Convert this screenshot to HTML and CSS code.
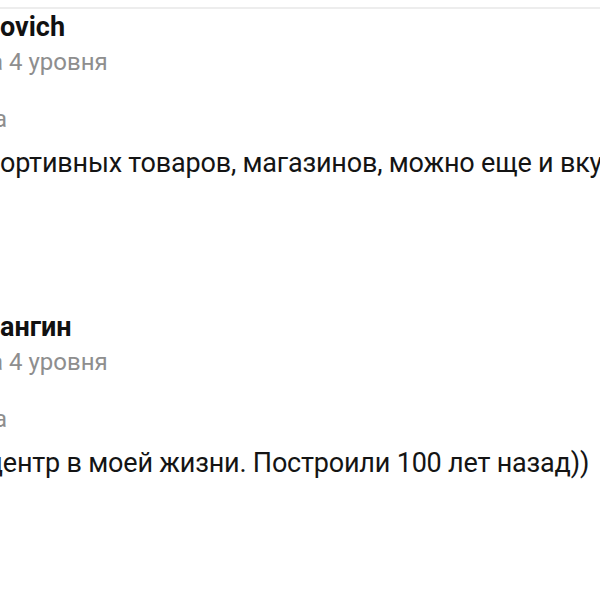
FILE: index.html
```html
<!DOCTYPE html>
<html lang="ru">
<head>
<meta charset="utf-8">
<title>Отзывы</title>
<link rel="stylesheet" href="styles.css">
</head>
<body>
<main class="reviews">
  <article class="review">
    <div class="author">ovich</div>
    <div class="level"><span class="tail">а</span> 4 уровня</div>
    <div class="meta"><span class="tail">а</span></div>
    <p class="text">ортивных товаров, магазинов, можно еще и вкусно поесть</p>
  </article>
  <article class="review">
    <div class="author">ангин</div>
    <div class="level"><span class="tail">а</span> 4 уровня</div>
    <div class="meta"><span class="tail">а</span></div>
    <p class="text"><span class="tail-c">ц</span>ентр в моей жизни. Построили 100 лет назад))</p>
  </article>
</main>
</body>
</html>
```

FILE: styles.css
```css
html, body {
  margin: 0;
  padding: 0;
  background: #ffffff;
  overflow: hidden;
}

body {
  width: 600px;
  height: 600px;
  font-family: Roboto, "Liberation Sans", Arial, sans-serif;
  color: #111111;
}

.reviews {
  border-top: 2px solid #ededed;
  margin-top: 7px;
  width: 900px;
}

.review {
  display: flex;
  flex-direction: column;
  height: 300px;
  white-space: nowrap;
}

.author {
  font-weight: 700;
  font-size: 27px;
  line-height: 30px;
  margin-top: 3px;
}

.level {
  font-size: 24px;
  line-height: 26px;
  color: #8e8e8e;
  margin-top: 7px;
  margin-left: -10px;
}

.meta {
  font-size: 24px;
  line-height: 26px;
  color: #8e8e8e;
  margin-top: 31px;
  margin-left: -6px;
}

.text {
  margin: 15px 0 0;
  font-size: 27px;
  line-height: 32px;
  letter-spacing: -0.2px;
  color: #141414;
}

.tail-c {
  margin-left: -13px;
}
```
